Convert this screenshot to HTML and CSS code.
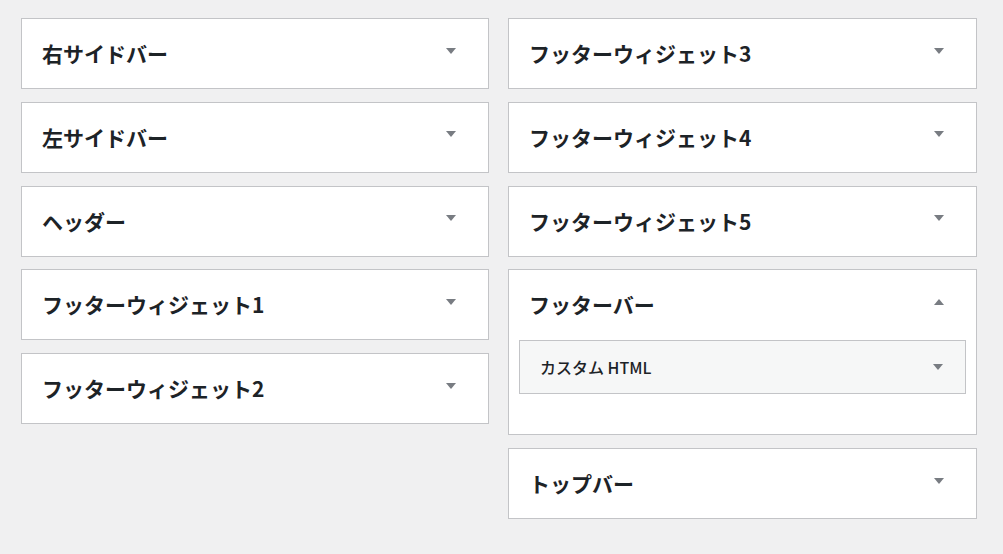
FILE: index.html
```html
<!DOCTYPE html>
<html lang="ja">
<head>
<meta charset="utf-8">
<title>ウィジェット</title>
<link rel="stylesheet" href="styles.css">
</head>
<body>
<div class="columns">
  <div class="col col-left">
    <div class="area"><div class="area-head"><h2>右サイドバー</h2><svg class="arrow" viewBox="0 0 10 6"><polygon points="0,0 10,0 5,6"/></svg></div></div>
    <div class="area"><div class="area-head"><h2>左サイドバー</h2><svg class="arrow" viewBox="0 0 10 6"><polygon points="0,0 10,0 5,6"/></svg></div></div>
    <div class="area"><div class="area-head"><h2>ヘッダー</h2><svg class="arrow" viewBox="0 0 10 6"><polygon points="0,0 10,0 5,6"/></svg></div></div>
    <div class="area"><div class="area-head"><h2>フッターウィジェット1</h2><svg class="arrow" viewBox="0 0 10 6"><polygon points="0,0 10,0 5,6"/></svg></div></div>
    <div class="area"><div class="area-head"><h2>フッターウィジェット2</h2><svg class="arrow" viewBox="0 0 10 6"><polygon points="0,0 10,0 5,6"/></svg></div></div>
  </div>
  <div class="col col-right">
    <div class="area"><div class="area-head"><h2>フッターウィジェット3</h2><svg class="arrow" viewBox="0 0 10 6"><polygon points="0,0 10,0 5,6"/></svg></div></div>
    <div class="area"><div class="area-head"><h2>フッターウィジェット4</h2><svg class="arrow" viewBox="0 0 10 6"><polygon points="0,0 10,0 5,6"/></svg></div></div>
    <div class="area"><div class="area-head"><h2>フッターウィジェット5</h2><svg class="arrow" viewBox="0 0 10 6"><polygon points="0,0 10,0 5,6"/></svg></div></div>
    <div class="area area-open">
      <div class="area-head"><h2>フッターバー</h2><svg class="arrow" viewBox="0 0 10 6"><polygon points="0,6 10,6 5,0"/></svg></div>
      <div class="widget"><h3>カスタム HTML</h3><svg class="arrow" viewBox="0 0 10 6"><polygon points="0,0 10,0 5,6"/></svg></div>
    </div>
    <div class="area"><div class="area-head"><h2>トップバー</h2><svg class="arrow" viewBox="0 0 10 6"><polygon points="0,0 10,0 5,6"/></svg></div></div>
  </div>
</div>
</body>
</html>
```

FILE: styles.css
```css
html, body {
  margin: 0;
  padding: 0;
  background: #f0f0f1;
}
body {
  font-family: "Noto Sans CJK JP", "Noto Sans", sans-serif;
  color: #1d2327;
  padding: 18px 0 0 21px;
}
.columns {
  display: flex;
  gap: 19px;
  align-items: flex-start;
}
.col {
  display: flex;
  flex-direction: column;
  gap: 12.75px;
}
.col-left { width: 468px; }
.col-right { width: 469px; }
.area {
  background: #fff;
  border: 1px solid #c3c4c7;
}
.area-head {
  height: 69px;
  display: flex;
  align-items: center;
  justify-content: space-between;
  padding: 0 32px 0 20px;
}
.area-head h2 {
  margin: 0;
  font-size: 21px;
  font-weight: 700;
  line-height: 1;
}
.arrow {
  width: 10px;
  height: 6px;
  fill: #787c82;
  flex: none;
}
.area-head .arrow {
  margin-bottom: 6px;
}
.area-open {
  padding-bottom: 40px;
}
.widget {
  margin: 1px 10px 0;
  height: 52px;
  border: 1px solid #c3c4c7;
  background: #f6f7f7;
  display: flex;
  align-items: center;
  justify-content: space-between;
  padding: 0 22px 0 20px;
}
.widget h3 {
  margin: 0;
  font-size: 16px;
  font-weight: 500;
  line-height: 1;
}
```
